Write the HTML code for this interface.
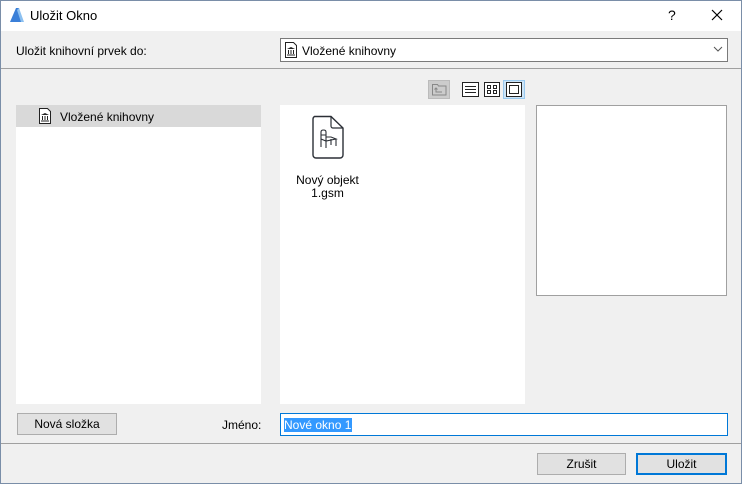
<!DOCTYPE html>
<html><head><meta charset="utf-8"><style>
body{margin:0;width:742px;height:484px;overflow:hidden;font-family:"Liberation Sans",sans-serif;font-size:12px;color:#000}
.win{position:absolute;left:0;top:0;width:742px;height:484px;background:#f0f0f0}
.a{position:absolute}
.btn{position:absolute;background:#e1e1e1;border:1px solid #adadad;text-align:center;box-sizing:border-box}
</style></head><body><div class="win">
<div class="a" style="left:0;top:0;width:742px;height:31px;background:#fff"></div>
<svg class="a" style="left:9px;top:7px" width="16" height="16"><path d="M1 15 L7 1 L10 1 L13 15 Z" fill="#3a7fd8"/><path d="M8 3 L12 15 L15 15 L10 1Z" fill="#8cc0f0"/></svg>
<div class="a" style="left:30px;top:8px;font-size:13px">Uložit Okno</div>
<div class="a" style="left:668px;top:7px;font-size:14px">?</div>
<svg class="a" style="left:711px;top:9px" width="12" height="12"><path d="M1 1L11 11M11 1L1 11" stroke="#000" stroke-width="1.2"/></svg>
<div class="a" style="left:16px;top:44px">Uložit knihovní prvek do:</div>
<div class="a" style="left:280px;top:38px;width:448px;height:24px;border:1px solid #7a7a7a;background:#fff;box-sizing:border-box"></div>
<svg class="a" style="left:284px;top:42px" width="14" height="16"><path d="M1.5 .5H9.5L12.5 3.5V15.5H1.5Z" fill="#fff" stroke="#222"/><path d="M3 7L7 5L11 7ZM4 8h1v4H4zM6.5 8h1v4h-1zM9 8h1v4H9zM3 12.5h8v1H3z" fill="#222"/></svg>
<div class="a" style="left:302px;top:44px">Vložené knihovny</div>
<svg class="a" style="left:713px;top:46px" width="10" height="6"><path d="M1 1L5 5L9 1" fill="none" stroke="#555"/></svg>
<div class="a" style="left:0;top:68px;width:742px;height:1px;background:#a0a0a0"></div>
<div class="a" style="left:428px;top:80px;width:22px;height:19px;background:#cccccc;border:1px solid #bbb;box-sizing:border-box"></div>
<svg class="a" style="left:432px;top:83px" width="15" height="13"><path d="M.5 1.5h5l1 1.5h7.5v9H.5Z" fill="none" stroke="#888"/><path d="M4 5v4h6M2.5 6.5L4 5 5.5 6.5" fill="none" stroke="#888"/></svg>
<svg class="a" style="left:462px;top:82px" width="17" height="15"><rect x=".5" y=".5" width="16" height="14" fill="#fff" stroke="#222"/><path d="M3 4.5h11M3 7.5h11M3 10.5h11" stroke="#222"/></svg>
<svg class="a" style="left:484px;top:82px" width="16" height="15"><rect x=".5" y=".5" width="15" height="14" fill="#fff" stroke="#222"/><path d="M3.5 3.5h3v3h-3zM9.5 3.5h3v3h-3zM3.5 8.5h3v3h-3zM9.5 8.5h3v3h-3z" fill="none" stroke="#222"/></svg>
<div class="a" style="left:503px;top:80px;width:22px;height:19px;background:#cce4f7;border:1px solid #99c9ef;box-sizing:border-box"></div>
<svg class="a" style="left:506px;top:82px" width="16" height="15"><rect x=".5" y=".5" width="15" height="14" fill="#fff" stroke="#222"/><rect x="3.5" y="3.5" width="9" height="8" fill="none" stroke="#222"/></svg>
<div class="a" style="left:16px;top:105px;width:245px;height:299px;background:#fff"></div>
<div class="a" style="left:16px;top:105px;width:245px;height:22px;background:#d9d9d9"></div>
<svg class="a" style="left:38px;top:108px" width="14" height="16"><path d="M1.5 .5H9.5L12.5 3.5V15.5H1.5Z" fill="#fff" stroke="#222"/><path d="M3 7L7 5L11 7ZM4 8h1v4H4zM6.5 8h1v4h-1zM9 8h1v4H9zM3 12.5h8v1H3z" fill="#222"/></svg>
<div class="a" style="left:60px;top:110px">Vložené knihovny</div>
<div class="a" style="left:280px;top:105px;width:245px;height:299px;background:#fff"></div>
<svg class="a" style="left:311px;top:115px" width="34" height="45"><path d="M3.5 1.5H20L32 13V40a3 3 0 0 1-3 3H5a3 3 0 0 1-3-3V4a3 3 0 0 1 1.5-2.5Z" fill="#fff" stroke="#2b2f36" stroke-width="1.4"/><path d="M20 1.5V11a2 2 0 0 0 2 2H32" fill="none" stroke="#2b2f36" stroke-width="1.2"/><path d="M10 32V17q0-2 2.5-2q2.5 0 2.5 2V26M10 20h5M10 24L15 26L25 24L20 22L15 22M15 26V33M25 24V31M20 24V30" fill="none" stroke="#2b2f36" stroke-width="1.1"/></svg>
<div class="a" style="left:280px;top:174px;width:95px;text-align:center;line-height:13px">Nový objekt<br>1.gsm</div>
<div class="a" style="left:536px;top:105px;width:191px;height:191px;background:#fff;border:1px solid #a0a0a0;box-sizing:border-box"></div>
<div class="btn" style="left:17px;top:413px;width:100px;height:22px;line-height:20px">Nová složka</div>
<div class="a" style="left:222px;top:418px">Jméno:</div>
<div class="a" style="left:280px;top:413px;width:448px;height:23px;border:1px solid #0078d7;background:#fff;box-sizing:border-box"></div>
<div class="a" style="left:284px;top:418px;background:#3399ff;color:#fff;line-height:14px;padding-right:1px">Nové okno 1</div>
<div class="a" style="left:0;top:443px;width:742px;height:1px;background:#a0a0a0"></div>
<div class="btn" style="left:537px;top:453px;width:89px;height:22px;line-height:20px">Zrušit</div>
<div class="btn" style="left:636px;top:453px;width:91px;height:22px;line-height:18px;border:2px solid #0078d7">Uložit</div>
<div class="a" style="left:0;top:0;width:740px;height:482px;border:1px solid #7a8ea8"></div>
</div></body></html>
